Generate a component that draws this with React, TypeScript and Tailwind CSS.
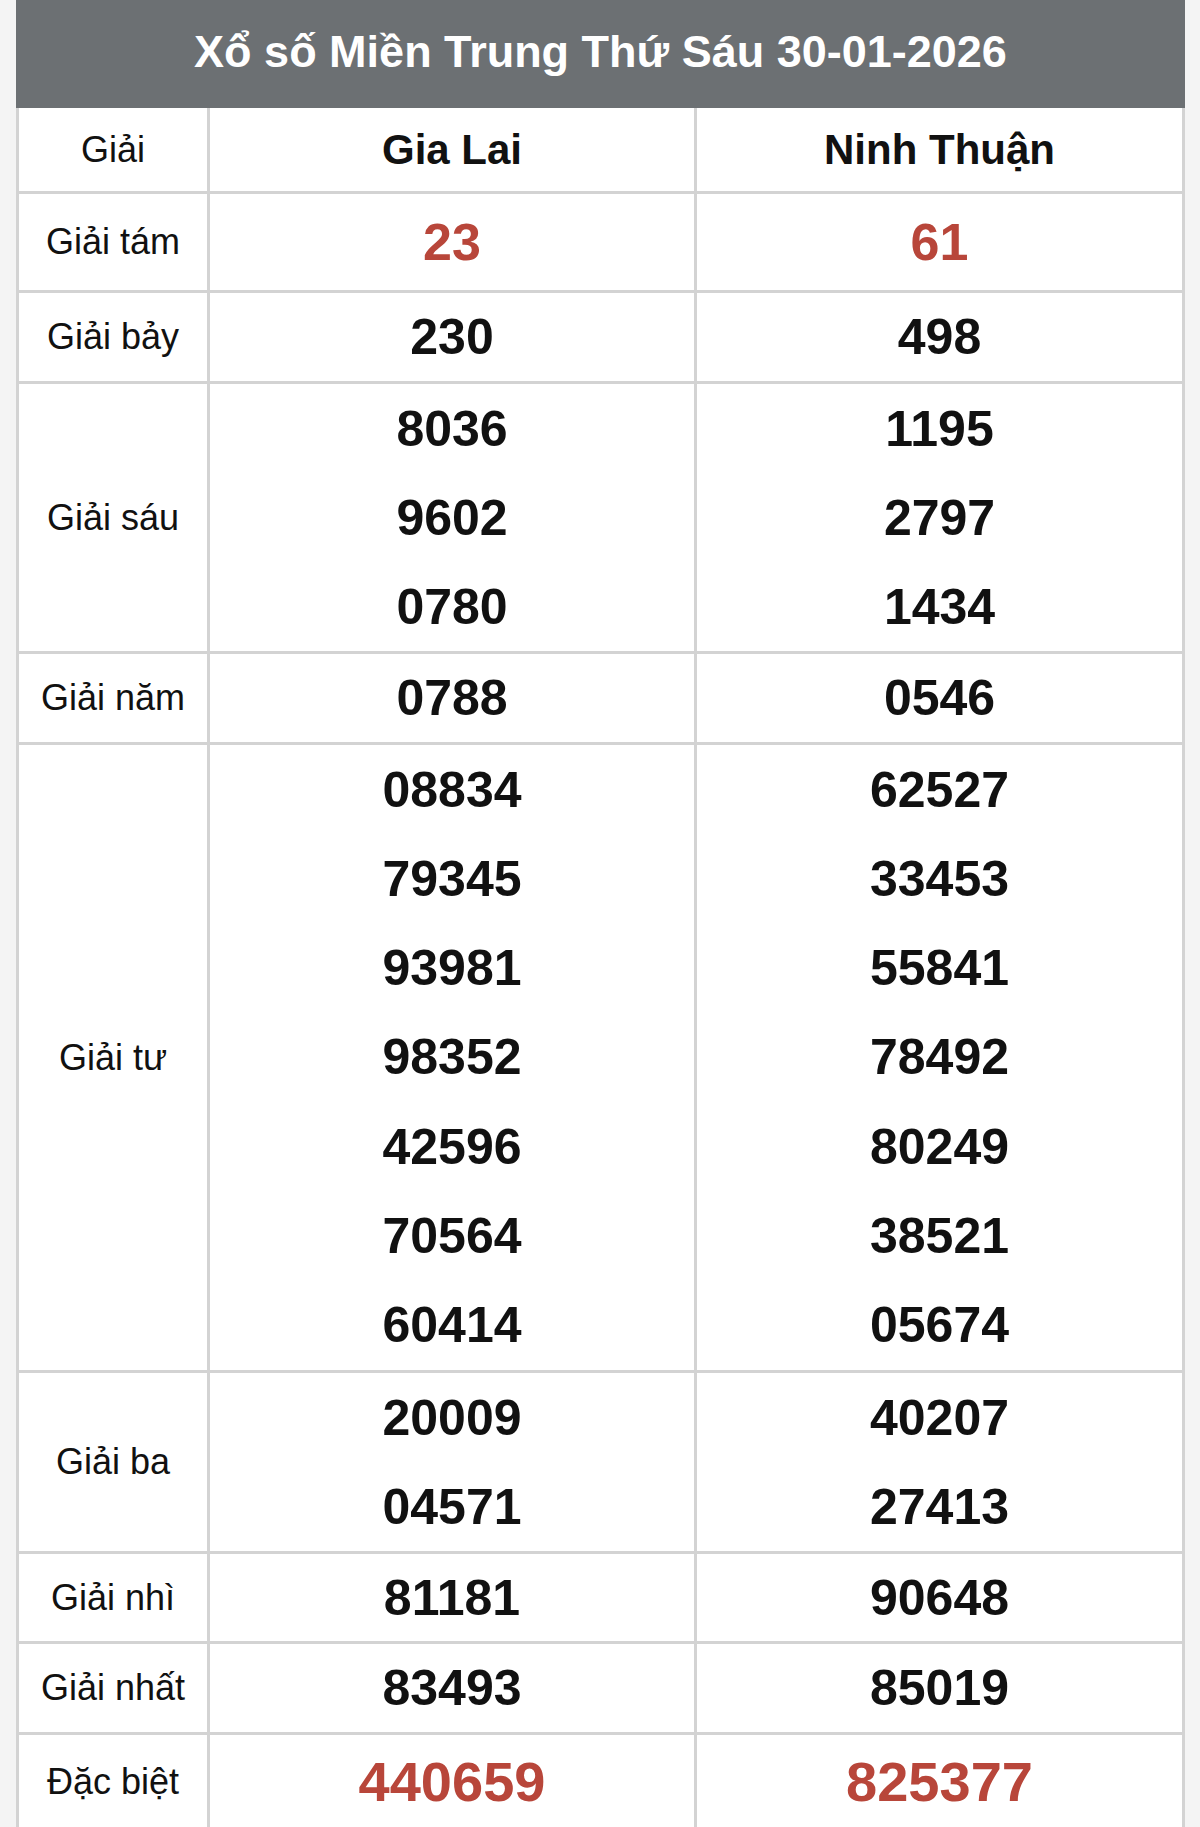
import React from 'react';

type Row = { label: string; a: string[]; b: string[]; h: number; kind?: 'red' | 'special' };

// h includes the 3px top border of each row
const ROWS: Row[] = [
  { label: 'Giải tám', a: ['23'], b: ['61'], h: 99, kind: 'red' },
  { label: 'Giải bảy', a: ['230'], b: ['498'], h: 91 },
  { label: 'Giải sáu', a: ['8036', '9602', '0780'], b: ['1195', '2797', '1434'], h: 270 },
  { label: 'Giải năm', a: ['0788'], b: ['0546'], h: 91 },
  {
    label: 'Giải tư',
    a: ['08834', '79345', '93981', '98352', '42596', '70564', '60414'],
    b: ['62527', '33453', '55841', '78492', '80249', '38521', '05674'],
    h: 628,
  },
  { label: 'Giải ba', a: ['20009', '04571'], b: ['40207', '27413'], h: 181 },
  { label: 'Giải nhì', a: ['81181'], b: ['90648'], h: 90 },
  { label: 'Giải nhất', a: ['83493'], b: ['85019'], h: 91 },
  { label: 'Đặc biệt', a: ['440659'], b: ['825377'], h: 97, kind: 'special' },
];

function NumCell({ values, kind, last }: { values: string[]; kind?: Row['kind']; last?: boolean }) {
  const tone =
    kind === 'special'
      ? 'text-[56px] text-[#b8463a]'
      : kind === 'red'
        ? 'text-[52px] text-[#b8463a]'
        : 'text-[50px] text-[#111]';
  return (
    <div className={`flex flex-col ${last ? 'flex-1' : 'w-[487px] border-r-[3px] border-[#d3d3d3]'}`}>
      {values.map((v, i) => (
        <div key={i} className={`flex flex-1 items-center justify-center font-bold leading-none ${tone}`}>
          {v}
        </div>
      ))}
    </div>
  );
}

export default function App() {
  return (
    <div className="min-h-[1827px] bg-[#f4f4f4] pl-[16px] pr-[15px] font-['Liberation_Sans',Arial,sans-serif]">
      <div className="flex flex-col bg-white">
        {/* title bar */}
        <div className="flex h-[108px] items-center justify-center bg-[#6c7073] pb-[5px] text-[45px] font-bold text-white">
          Xổ số Miền Trung Thứ Sáu 30-01-2026
        </div>

        <div className="flex flex-col border-x-[3px] border-[#d3d3d3]">
          {/* column heads */}
          <div className="flex h-[83px]">
            <div className="flex w-[191px] items-center justify-center border-r-[3px] border-[#d3d3d3] text-[36px] text-[#111]">
              Giải
            </div>
            <div className="flex w-[487px] items-center justify-center border-r-[3px] border-[#d3d3d3] text-[42px] font-bold text-[#111]">
              Gia Lai
            </div>
            <div className="flex flex-1 items-center justify-center text-[42px] font-bold text-[#111]">
              Ninh Thuận
            </div>
          </div>

          {ROWS.map((r) => (
            <div key={r.label} className="flex border-t-[3px] border-[#d3d3d3]" style={{ height: r.h }}>
              <div className="flex w-[191px] items-center justify-center border-r-[3px] border-[#d3d3d3] text-[36px] text-[#111]">
                {r.label}
              </div>
              <NumCell values={r.a} kind={r.kind} />
              <NumCell values={r.b} kind={r.kind} last />
            </div>
          ))}
        </div>
      </div>
    </div>
  );
}
